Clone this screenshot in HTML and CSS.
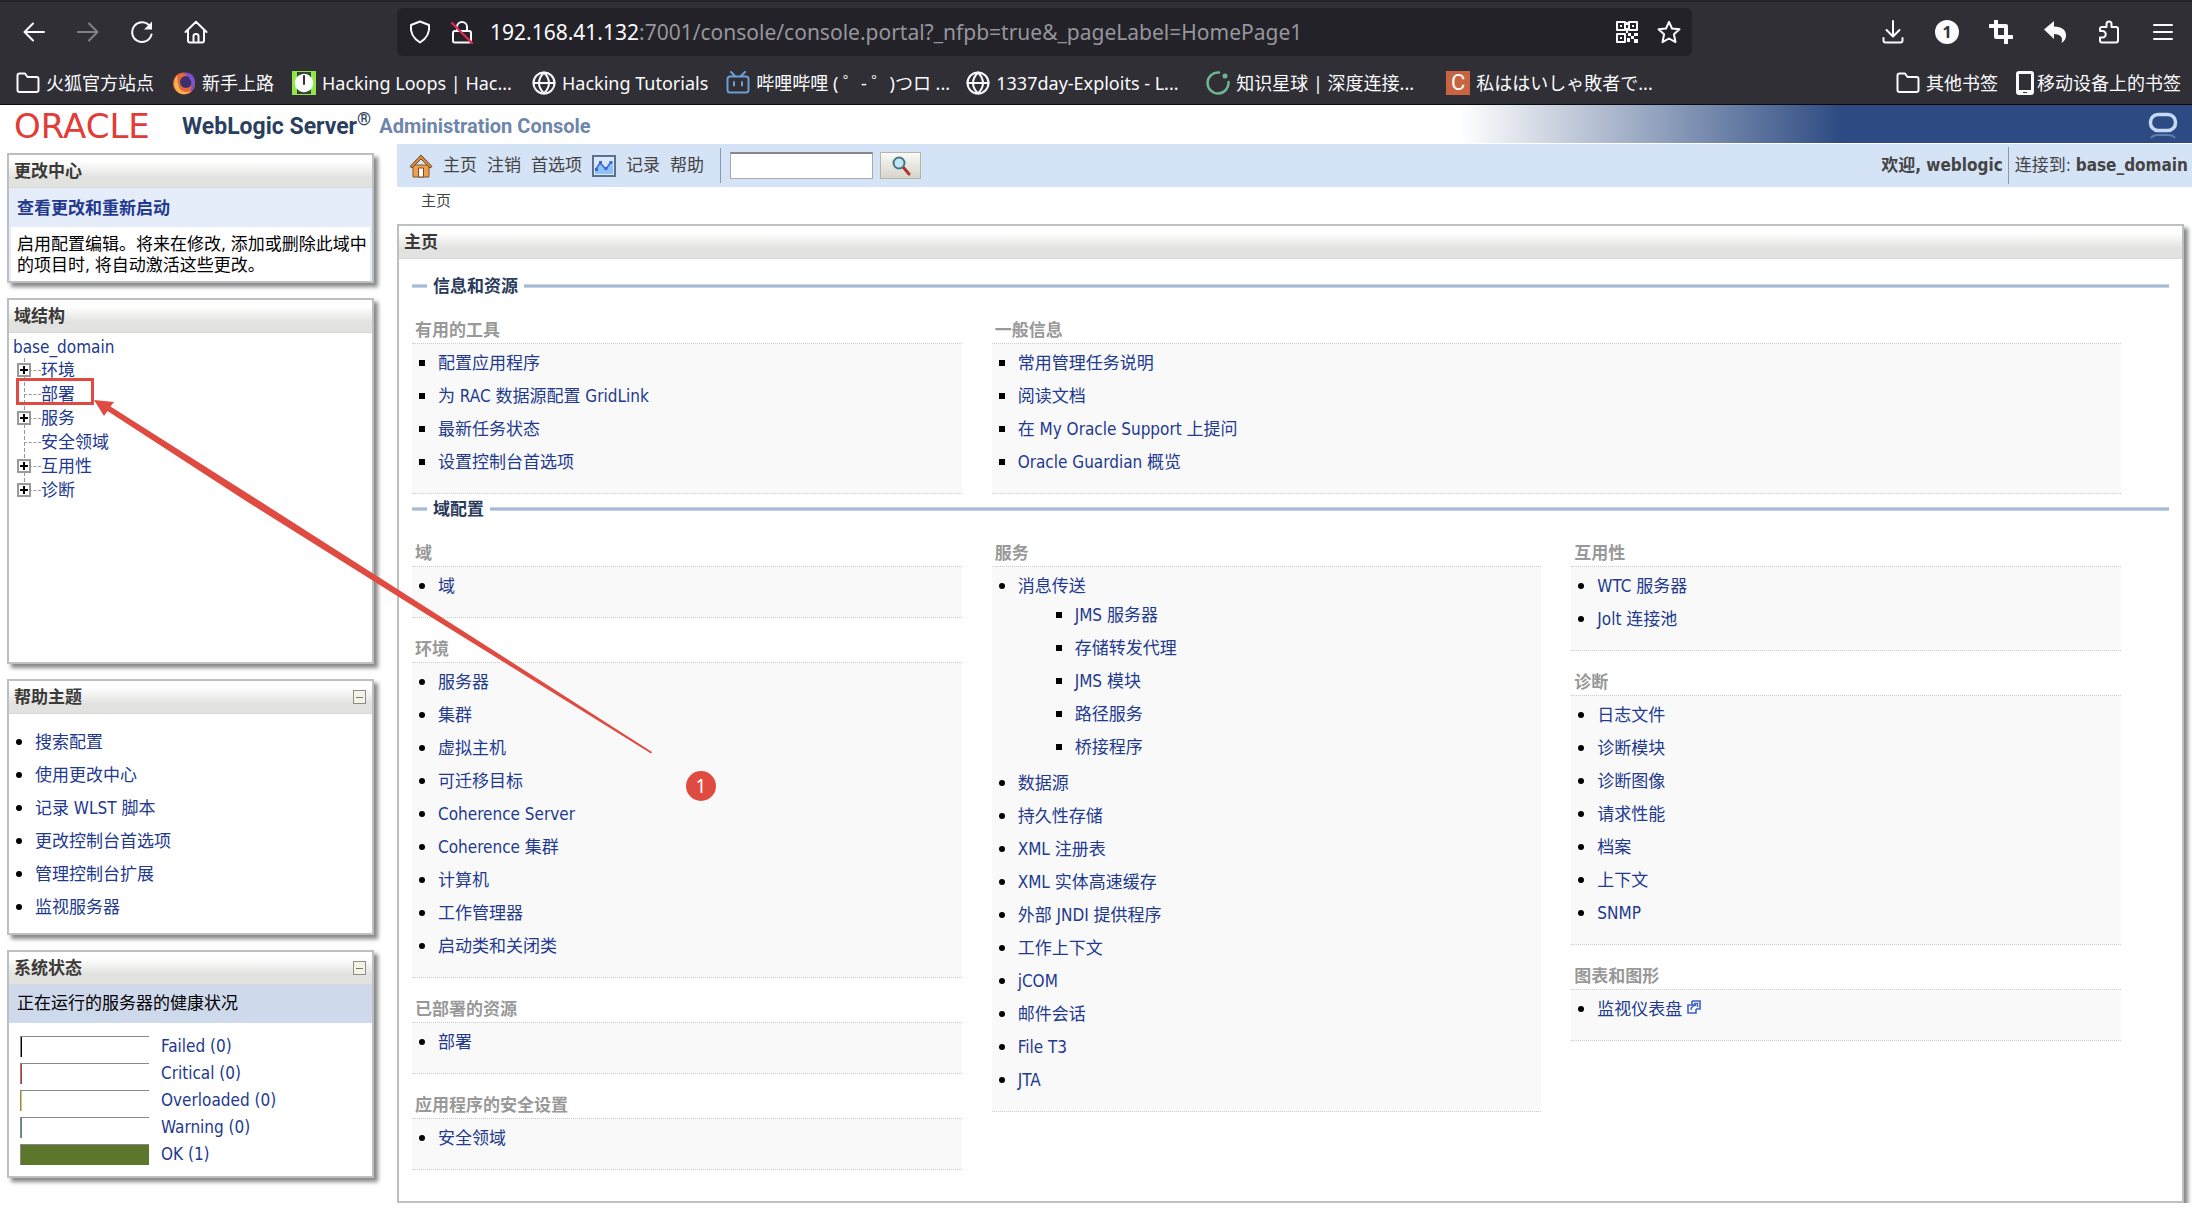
FILE: index.html
```html
<!DOCTYPE html>
<html lang="zh-CN">
<head>
<meta charset="utf-8">
<title>主页 - WebLogic Server Administration Console</title>
<link rel="stylesheet" href="styles.css">
</head>
<body>
<header class="browser">
  <div class="toolbar">
    <div class="nav-buttons">
      <button class="icon-btn" aria-label="Back"><svg viewBox="0 0 24 24"><path d="M22 12H3M11 3.500L2.500 12l8.500 8.500"/></svg></button>
      <button class="icon-btn dim" aria-label="Forward"><svg viewBox="0 0 24 24"><path d="M2 12h19M13 3.500L21.500 12 13 20.500"/></svg></button>
      <button class="icon-btn" aria-label="Reload"><svg viewBox="0 0 24 24"><path d="M21.500 14.500A9.800 9.800 0 1 1 20 6.500"/><path d="M22 1.500v8h-8z" fill="#fbfbfe" stroke="none"/></svg></button>
      <button class="icon-btn" aria-label="Home"><svg viewBox="0 0 24 24"><path d="M1.500 12L12 1.800 22.500 12M4 10v10.500q0 2 2 2h12q2 0 2-2V10M9.500 22v-6q0-2 2.500-2t2.500 2v6"/></svg></button>
    </div>
    <div class="url-box">
      <svg class="ico" viewBox="0 0 24 24"><path d="M12 1.500l9 3.500q1.500 11-9 17.500Q1.500 16 3 5z"/></svg>
      <svg class="ico lock" viewBox="0 0 24 24"><path d="M7 11V7a5 5 0 0 1 10 0v4M5 11h14q2 0 2 2v8q0 1.500-2 1.500H5q-2 0-2-1.500v-8q0-2 2-2z"/><path d="M2 3l20 20" stroke="#e22850" stroke-width="2.400"/></svg>
      <div class="url"><b>192.168.41.132</b>:7001/console/console.portal?_nfpb=true&amp;_pageLabel=HomePage1</div>
      <button class="icon-btn" aria-label="QR code"><svg viewBox="0 0 24 24"><path d="M2 2h8v8H2zM14 2h8v8h-8zM2 14h8v8H2z"/><path d="M5 5h2v2H5zM17 5h2v2h-2zM5 17h2v2H5zM11 2h2v3h-2zM11 8h2v5h-2zM13 13h3v3h-3zM19 13h4v3h-4zM16 16h3v3h-3zM12 18h3v4h-3zM19 19h4v4h-4z" fill="#fbfbfe" stroke="none"/></svg></button>
      <button class="icon-btn" aria-label="Bookmark"><svg viewBox="0 0 24 24"><path d="M12 1.800l3 6.700 7.500.8-5.600 5 1.600 7.800L12 18.500l-6.500 3.600 1.600-7.800-5.600-5 7.500-.8z"/></svg></button>
    </div>
    <div class="tool-buttons">
      <button class="icon-btn" aria-label="Downloads"><svg viewBox="0 0 24 24"><path d="M12 1v15M5.500 10l6.500 6.500 6.500-6.500M2.500 18v2.500q0 2 2 2h15q2 0 2-2V18"/></svg></button>
      <button class="icon-btn count" aria-label="Extension">1</button>
      <button class="icon-btn" aria-label="Crop"><svg viewBox="0 0 24 24"><path d="M7 1v16h16M1 6h16v17" stroke-width="4"/></svg></button>
      <button class="icon-btn" aria-label="Undo"><svg viewBox="0 0 24 24"><path d="M1 9.500L11 1v5.500q12 .5 12 9Q23 20 18.500 23q2.500-8.500-7.500-9v5z" fill="#fbfbfe" stroke="none"/></svg></button>
      <button class="icon-btn" aria-label="Extensions"><svg viewBox="0 0 24 24"><path d="M3 11V9q0-2 2-2h4.500V4a2.500 2.500 0 0 1 5 0v3H19q2 0 2 2v11.500q0 2-2 2H5q-2 0-2-2V17.500h2.500a3.200 3.200 0 0 0 0-6.500z"/></svg></button>
      <button class="icon-btn" aria-label="Menu"><svg viewBox="0 0 24 24"><path d="M3 5h18M3 12h18M3 19h18"/></svg></button>
    </div>
  </div>
  <nav class="bookmarks">
    <a href="#" class="bm"><svg class="ico" viewBox="0 0 24 24"><path d="M1.500 19V4.500q0-2 2-2H9L11.500 6h9q2 0 2 2v11q0 2-2 2h-17q-2 0-2-2z"/></svg>火狐官方站点</a>
    <a href="#" class="bm"><svg class="ico" viewBox="0 0 24 24"><circle cx="12" cy="12.500" r="11" fill="#e8663d" stroke="none"/><path d="M5 4Q-1 14 6 21q7 5 14-1Q8 24 6 13q-1-5-1-9z" fill="#f7b551" stroke="none"/><circle cx="14" cy="11" r="6" fill="#39306d" stroke="none"/><path d="M11 2q11-2 12 9 0 7-5 10 5-13-7-19z" fill="#7a4fd0" stroke="none"/></svg>新手上路</a>
    <a href="#" class="bm capped"><svg class="ico" viewBox="0 0 24 24"><path d="M0 0h24v24H0z" fill="#8fe84a" stroke="none"/><path d="M5 1h14v5H5zM5 18h14v5H5z" fill="#3a4433" stroke="none"/><circle cx="12" cy="12" r="8" fill="#fff" stroke="#fff" stroke-width="2.500" stroke-dasharray="3 2"/><path d="M12 5v8" stroke="#333"/></svg>Hacking Loops | Hac...</a>
    <a href="#" class="bm"><svg class="ico" viewBox="0 0 24 24"><circle cx="12" cy="12" r="10.500"/><path d="M1.500 12h21M12 1.500q-10 10.500 0 21 10-10.500 0-21"/></svg>Hacking Tutorials</a>
    <a href="#" class="bm capped"><svg class="ico bili" viewBox="0 0 24 24"><path d="M4 5.500h16q2.500 0 2.500 2.500v11q0 2.500-2.500 2.500H4Q1.500 21.500 1.500 19V8q0-2.500 2.500-2.500zM5 1l4 4M19 1l-4 4M8 11v3.500M16 11v3.500"/></svg>哔哩哔哩 ( ゜- ゜)つロ ...</a>
    <a href="#" class="bm capped"><svg class="ico" viewBox="0 0 24 24"><circle cx="12" cy="12" r="10.500"/><path d="M1.500 12h21M12 1.500q-10 10.500 0 21 10-10.500 0-21"/></svg>1337day-Exploits - L...</a>
    <a href="#" class="bm capped"><svg class="ico" viewBox="0 0 24 24"><path d="M13 1.500A10.500 10.500 0 1 0 22.500 11" stroke="#6fb592" stroke-width="2.500"/><circle cx="19" cy="5" r="2.500" fill="#6fb592" stroke="none"/></svg>知识星球 | 深度连接...</a>
    <a href="#" class="bm capped"><span class="c-badge">C</span>私ははいしゃ敗者で...</a>
    <a href="#" class="bm push"><svg class="ico" viewBox="0 0 24 24"><path d="M1.500 19V4.500q0-2 2-2H9L11.500 6h9q2 0 2 2v11q0 2-2 2h-17q-2 0-2-2z"/></svg>其他书签</a>
    <a href="#" class="bm phone"><svg class="ico" viewBox="0 0 18 24"><path d="M3 0h12q3 0 3 3v18q0 3-3 3H3q-3 0-3-3V3q0-3 3-3z" fill="#fbfbfe" stroke="none"/><path d="M3 3h12v16H3zM7 21h4v1H7z" fill="#2f2f35" stroke="none"/></svg>移动设备上的书签</a>
  </nav>
</header>

<div class="banner">
  <span class="oracle">ORACLE</span>
  <span class="product">WebLogic Server<sup>®</sup></span>
  <span class="sub">Administration Console</span>
  <svg class="o-mark" viewBox="0 0 30 28"><rect x="2.500" y="2.500" width="25" height="16" rx="7.500" fill="none" stroke="#c6daf5" stroke-width="3.500"/><path d="M3 26q2-3 7-3h10q5 0 7 3" fill="none" stroke="#5f7fb3" stroke-width="2"/></svg>
</div>

<div class="page">
  <aside class="side">
    <section class="panel">
      <h2>更改中心</h2>
      <div class="change">
        <h3>查看更改和重新启动</h3>
        <p>启用配置编辑。将来在修改, 添加或删除此域中的项目时, 将自动激活这些更改。</p>
      </div>
    </section>
    <section class="panel tree-panel">
      <h2>域结构</h2>
      <div class="tree">
        <a href="#">base_domain</a>
        <ul>
          <li class="node"><button class="plus" aria-label="展开"></button><a href="#">环境</a></li>
          <li class="node target"><a href="#">部署</a></li>
          <li class="node"><button class="plus" aria-label="展开"></button><a href="#">服务</a></li>
          <li class="node"><a href="#">安全领域</a></li>
          <li class="node"><button class="plus" aria-label="展开"></button><a href="#">互用性</a></li>
          <li class="node"><button class="plus" aria-label="展开"></button><a href="#">诊断</a></li>
        </ul>
      </div>
    </section>
    <section class="panel">
      <h2>帮助主题<button class="minus" aria-label="折叠"></button></h2>
      <ul class="links help">
        <li><a href="#">搜索配置</a></li>
        <li><a href="#">使用更改中心</a></li>
        <li><a href="#">记录 WLST 脚本</a></li>
        <li><a href="#">更改控制台首选项</a></li>
        <li><a href="#">管理控制台扩展</a></li>
        <li><a href="#">监视服务器</a></li>
      </ul>
    </section>
    <section class="panel">
      <h2>系统状态<button class="minus" aria-label="折叠"></button></h2>
      <h3 class="health">正在运行的服务器的健康状况</h3>
      <ul class="status">
        <li><span class="bar"><i class="failed"></i></span><a href="#">Failed (0)</a></li>
        <li><span class="bar"><i class="critical"></i></span><a href="#">Critical (0)</a></li>
        <li><span class="bar"><i class="overloaded"></i></span><a href="#">Overloaded (0)</a></li>
        <li><span class="bar"><i class="warning"></i></span><a href="#">Warning (0)</a></li>
        <li><span class="bar"><i class="ok" style="width:100%"></i></span><a href="#">OK (1)</a></li>
      </ul>
    </section>
  </aside>

  <main class="main">
    <nav class="menubar">
      <svg class="m-ico" viewBox="0 0 24 24"><path d="M4 11h16v12H4z" fill="#f0a04b" stroke="#7b5530"/><path d="M1 12.500L12 1l11 11.500-2 1.500-9-9-9 9z" fill="#d98a35" stroke="#6d4a2b"/><path d="M9.500 14h5v9h-5z" fill="#fff" stroke="#7b4a20"/></svg>
      <a href="#">主页</a><a href="#">注销</a><a href="#">首选项</a>
      <svg class="m-ico chart" viewBox="0 0 24 22"><path d="M1 1h22v20H1z" fill="#dbe8fb" stroke="#5b6f8e" stroke-width="2"/><path d="M3 16l5-8 6 6 5-6 2 2v9H3z" fill="#8fc0f7"/><path d="M4 14l4-6 6 6 5-7" fill="none" stroke="#3a66d8" stroke-width="1.500"/><path d="M3 13h3v3H3zM7 6h3v3H7zM12.500 12h3v3h-3zM17.500 6h3v3h-3z" fill="#3a66d8"/></svg>
      <a href="#">记录</a><a href="#">帮助</a>
      <form class="search">
        <input type="text" aria-label="搜索">
        <button type="button" aria-label="搜索"><svg viewBox="0 0 20 20"><path d="M12 11l6 7" stroke="#b03328" stroke-width="3" stroke-linecap="round"/><circle cx="8" cy="7" r="5.500" fill="#bfe6f5" stroke="#4d7284" stroke-width="2"/></svg></button>
      </form>
      <div class="who"><b>欢迎, weblogic</b><span class="conn">连接到: <b>base_domain</b></span></div>
    </nav>
    <div class="crumb">主页</div>
    <section class="panel home">
      <h2>主页</h2>
      <div class="content">
        <h3 class="rule">信息和资源</h3>
        <div class="cols two">
          <div>
            <h4>有用的工具</h4>
            <ul class="links box square">
              <li><a href="#">配置应用程序</a></li>
              <li><a href="#">为 RAC 数据源配置 GridLink</a></li>
              <li><a href="#">最新任务状态</a></li>
              <li><a href="#">设置控制台首选项</a></li>
            </ul>
          </div>
          <div class="wide">
            <h4>一般信息</h4>
            <ul class="links box square">
              <li><a href="#">常用管理任务说明</a></li>
              <li><a href="#">阅读文档</a></li>
              <li><a href="#">在 My Oracle Support 上提问</a></li>
              <li><a href="#">Oracle Guardian 概览</a></li>
            </ul>
          </div>
        </div>
        <h3 class="rule">域配置</h3>
        <div class="cols">
          <div>
            <h4>域</h4>
            <ul class="links box"><li><a href="#">域</a></li></ul>
            <h4>环境</h4>
            <ul class="links box">
              <li><a href="#">服务器</a></li>
              <li><a href="#">集群</a></li>
              <li><a href="#">虚拟主机</a></li>
              <li><a href="#">可迁移目标</a></li>
              <li><a href="#">Coherence Server</a></li>
              <li><a href="#">Coherence 集群</a></li>
              <li><a href="#">计算机</a></li>
              <li><a href="#">工作管理器</a></li>
              <li><a href="#">启动类和关闭类</a></li>
            </ul>
            <h4>已部署的资源</h4>
            <ul class="links box"><li><a href="#">部署</a></li></ul>
            <h4>应用程序的安全设置</h4>
            <ul class="links box"><li><a href="#">安全领域</a></li></ul>
          </div>
          <div>
            <h4>服务</h4>
            <ul class="links box">
              <li class="parent"><a href="#">消息传送</a>
                <ul class="nested">
                  <li><a href="#">JMS 服务器</a></li>
                  <li><a href="#">存储转发代理</a></li>
                  <li><a href="#">JMS 模块</a></li>
                  <li><a href="#">路径服务</a></li>
                  <li><a href="#">桥接程序</a></li>
                </ul>
              </li>
              <li><a href="#">数据源</a></li>
              <li><a href="#">持久性存储</a></li>
              <li><a href="#">XML 注册表</a></li>
              <li><a href="#">XML 实体高速缓存</a></li>
              <li><a href="#">外部 JNDI 提供程序</a></li>
              <li><a href="#">工作上下文</a></li>
              <li><a href="#">jCOM</a></li>
              <li><a href="#">邮件会话</a></li>
              <li><a href="#">File T3</a></li>
              <li><a href="#">JTA</a></li>
            </ul>
          </div>
          <div>
            <h4>互用性</h4>
            <ul class="links box">
              <li><a href="#">WTC 服务器</a></li>
              <li><a href="#">Jolt 连接池</a></li>
            </ul>
            <h4>诊断</h4>
            <ul class="links box">
              <li><a href="#">日志文件</a></li>
              <li><a href="#">诊断模块</a></li>
              <li><a href="#">诊断图像</a></li>
              <li><a href="#">请求性能</a></li>
              <li><a href="#">档案</a></li>
              <li><a href="#">上下文</a></li>
              <li><a href="#">SNMP</a></li>
            </ul>
            <h4>图表和图形</h4>
            <ul class="links box"><li><a href="#">监视仪表盘 <svg class="ext" viewBox="0 0 14 14"><path d="M5 1h8v8H9M5 1v4" fill="none" stroke="#3f62c4" stroke-width="1.600"/><path d="M9 5H1v8h8V9" fill="none" stroke="#3f62c4" stroke-width="1.600"/><path d="M4 10q0-4 5-5M7 3.500h3.500V7" fill="none" stroke="#3f62c4" stroke-width="1.400"/></svg></a></li></ul>
          </div>
        </div>
      </div>
    </section>
  </main>
</div>

<svg class="arrow" width="660" height="760" viewBox="0 0 660 760"><path d="M94 400L114 402 110.500 406.500 258 500 420 603.500 652 752 651 753.500 418 609 246 501 107.500 411 104 416z" fill="#df4b40"/></svg>
<span class="step">1</span>
</body>
</html>
```

FILE: styles.css
```css
*, *::before, *::after { box-sizing: border-box; }

body {
  margin: 0;
  background: #fff;
  color: #000;
  font: 17px/21px "DejaVu Sans Condensed", "Noto Sans CJK SC", sans-serif;
  position: relative;
}

ul { list-style: none; margin: 0; padding: 0; }
h2, h3, h4, p { margin: 0; font-size: inherit; }
a { color: #22398f; text-decoration: none; }
button { padding: 0; border: 0; background: none; font: inherit; color: inherit; }
svg { flex: none; }

/* browser chrome */
.browser {
  height: 105px;
  background: #2f2f35;
  border-top: 2px solid #232228;
  border-bottom: 1px solid #0c0c0d;
  color: #fbfbfe;
  font-family: "Noto Sans", "Noto Sans CJK SC", sans-serif;
}
.browser svg { fill: none; stroke: #fbfbfe; stroke-width: 2; stroke-linejoin: round; stroke-linecap: round; }
.toolbar { display: flex; padding-top: 6px; align-items: center; }
.nav-buttons { display: flex; gap: 30px; width: 397px; padding-left: 22px; }
.icon-btn { width: 24px; height: 24px; flex: none; }
.icon-btn svg { display: block; width: 24px; height: 24px; }
.dim { opacity: .4; }
.ico { width: 24px; height: 24px; }
.url-box {
  flex: 1;
  display: flex;
  align-items: center;
  gap: 18px;
  height: 48px;
  padding: 0 11px;
  background: #232228;
  border-radius: 6px;
}
.url { flex: 1; font-size: 21px; line-height: 30px; color: #96959d; margin-left: -2px; white-space: nowrap; }
.url b { font-weight: 400; color: #fbfbfe; }
.tool-buttons { display: flex; gap: 30px; padding: 0 17px 0 189px; }
.count {
  border-radius: 50%;
  background: #fbfbfe;
  color: #2f2f35;
  font-weight: 700;
  font-size: 16px;
  line-height: 24px;
}
.bookmarks { display: flex; gap: 18px; padding: 14px 11px 0 16px; }
.bm { display: flex; align-items: center; gap: 6px; color: #fbfbfe; font-size: 18px; line-height: 26px; white-space: nowrap; }
.capped { width: 222px; }
.push { margin-left: auto; }
.phone { gap: 3px; }
.phone .ico { width: 18px; }
.browser .bili { stroke: #6d9ed6; stroke-width: 2; }
.c-badge { width: 24px; height: 24px; background: #c96442; text-align: center; font: 22px/24px Roboto, sans-serif; }

/* product banner */
.banner {
  display: flex;
  align-items: center;
  height: 38px;
  padding: 4px 14px 0;
  background: linear-gradient(90deg, #fff 66.6%, #2d4b82 84%);
  font-family: Roboto, sans-serif;
}
.oracle { width: 168px; font: 34px/34px "DejaVu Sans", sans-serif; color: #e23b38; }
.product { font-size: 23px; font-weight: 700; color: #2a3f60; }
.product sup { font-size: 18px; line-height: 0; }
.sub { margin-left: 8px; font-size: 20px; font-weight: 700; color: #6d86ac; }
.o-mark { width: 30px; height: 28px; margin-left: auto; }

/* page frame */
.page { display: flex; align-items: flex-start; }
.side { width: 367px; margin: 10px 23px 0 7px; display: flex; flex-direction: column; gap: 15px; flex: none; }
.main { flex: 1; padding-top: 1px; }
.panel { border: 2px solid #bcc0c3; background: #fff; box-shadow: 4px 4px 4px #888; }
.panel h2 {
  display: flex;
  align-items: center;
  justify-content: space-between;
  height: 33px;
  padding: 0 6px 0 5px;
  border-bottom: 1px solid #d8d8d8;
  background: linear-gradient(#fff 20%, #e2e2e1 70%);
  color: #3b3a36;
}

.change { background: #e6edfa; padding: 0 2px; }
.change h3 { padding: 10px 6px 8px; color: #22398f; }
.change p { background: #fff; padding: 7px 2px 5px 6px; }

.tree-panel { height: 366px; }
.tree { padding: 3px 4px; line-height: 24px; }
.tree > a { display: block; line-height: 22px; }
.tree ul {
  margin-left: 11px;
  background: repeating-linear-gradient(#999 0 4px, transparent 4px 6px) 0 0 / 1px 130px no-repeat;
}
.node { display: flex; align-items: center; height: 24px; }
.node::before { content: ""; width: 17px; border-top: 1px dashed #999; }
.plus {
  order: -1;
  width: 14px;
  height: 14px;
  margin: 0 -7px 0 -7px;
  border: 2px solid #999;
  background:
    linear-gradient(#000, #000) center / 8px 2px no-repeat,
    linear-gradient(#000, #000) center / 2px 8px no-repeat,
    #fff;
  z-index: 1;
}
.target { position: relative; }
.target::after { content: ""; position: absolute; left: -8px; top: -4px; width: 78px; height: 27px; border: 3px solid #df4b40; }

.minus {
  width: 13px;
  height: 14px;
  border: 1px solid #8d8d83;
  background: linear-gradient(#77776d, #77776d) center / 7px 1px no-repeat, #f3f3ea;
}

.links { list-style: disc; line-height: 20px; }
.links li { padding: 6px 0; }
.links li::marker { color: #000; font-size: 20px; }
.help { padding: 11px 0 10px 26px; }
.square, .nested { list-style: square; }

.health { height: 38px; padding: 8px; background: #cfd9ec; font-weight: 400; }
.status { padding: 10px 11px 8px; }
.status li { display: flex; align-items: center; gap: 12px; height: 27px; }
.bar { width: 129px; height: 21px; border-top: 1px solid #888; border-left: 1px solid #888; }
.bar i { display: block; width: 1px; height: 100%; }
.failed { background: #000; }
.critical { background: #d02a2a; }
.overloaded { background: #e8c34a; }
.warning { background: #4f8c96; }
.ok { background: #5c762b; }

/* menu bar */
.menubar { display: flex; align-items: center; gap: 10px; height: 43px; padding: 0 4px 0 12px; background: #d5e3f6; }
.menubar a, .who { color: #444; }
.m-ico { width: 24px; height: 24px; }
.chart { height: 22px; }
.search { display: flex; align-items: center; gap: 7px; height: 35px; padding-left: 9px; margin-left: 6px; border-left: 1px solid #8a97aa; }
.search input { width: 143px; height: 27px; border: 1px solid #aaa; border-top: 2px solid #888; background: #fff; padding: 0 4px; }
.search button { width: 41px; height: 27px; border: 1px solid #b5b5ae; background: linear-gradient(#fafaf6, #d5d5cc); }
.search button svg { display: block; margin: auto; width: 20px; height: 20px; }
.who { display: flex; align-items: center; gap: 5px; margin-left: auto; line-height: 37px; }
.conn { border-left: 1px solid #8a97aa; padding-left: 6px; }
.crumb { padding: 4px 24px 12px; font-size: 15px; color: #444; }

/* home panel */
.home { margin-right: 8px; }
.content { padding: 15px 13px 31px; }
.rule { display: flex; align-items: center; gap: 6px; height: 24px; color: #2a3a5c; }
.rule::before, .rule::after { content: ""; height: 4px; background: #a5bad5; border: 1px solid #c6d3e4; border-width: 1px 0; }
.rule::before { width: 15px; }
.rule::after { flex: 1; }
.cols { display: grid; grid-template-columns: repeat(3, 1fr); gap: 0 30px; padding: 20px 48px 0 0; }
.two { margin-bottom: 3px; }
.wide { grid-column: span 2; }
.cols h4 { height: 44px; padding: 21px 3px 0; color: #999; }
.cols h4:first-child { height: 25px; padding-top: 2px; }
.box { border: 1px dotted #ccc; border-width: 1px 0; background: #f9f9f9; padding: 2px 0 15px 26px; }
.links .parent { padding-bottom: 3px; }
.nested { margin-top: 2px; padding-left: 57px; }
.ext { width: 14px; height: 14px; vertical-align: 1px; }

/* annotation over the console */
.arrow { position: absolute; left: 0; top: 0; pointer-events: none; }
.step {
  position: absolute;
  left: 686px;
  top: 771px;
  width: 30px;
  height: 30px;
  border-radius: 50%;
  background: #df4b40;
  color: #fff;
  text-align: center;
  font: 19px/30px "Noto Sans", sans-serif;
}
```
